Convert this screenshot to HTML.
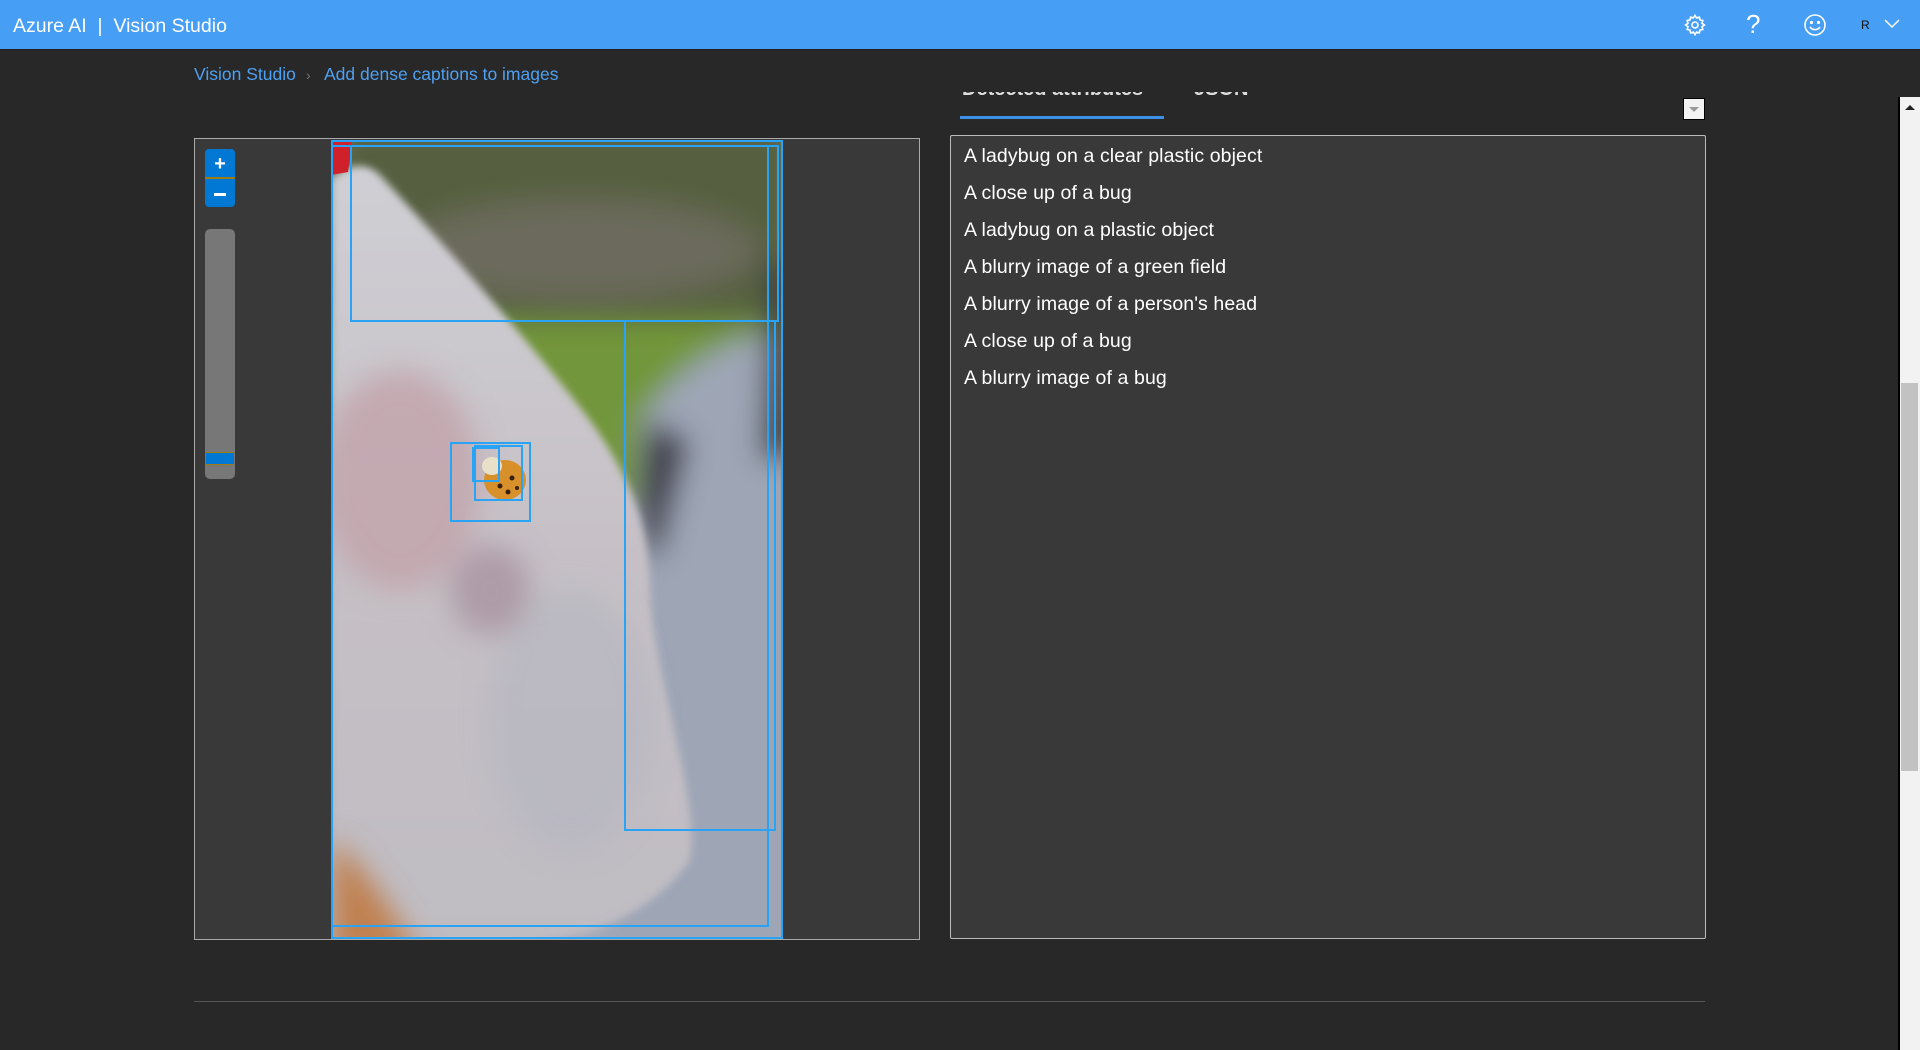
<!DOCTYPE html>
<html><head><meta charset="utf-8"><style>
*{margin:0;padding:0;box-sizing:border-box}
body{width:1920px;height:1050px;background:#282828;position:relative;overflow:hidden;font-family:"Segoe UI","Liberation Sans",sans-serif;color:#fff}
.hdr{position:absolute;left:0;top:0;width:1920px;height:50px;background:#469ff5;border-bottom:1px solid #1e1e1e}
.hdr .t{position:absolute;left:13px;top:15px;font-size:19.5px;color:#fff}
.bc{position:absolute;top:64px;font-size:17.5px;color:#4ea0f2}
.abs{position:absolute}
.cap{position:absolute;left:964px;font-size:19.5px;color:#fff;letter-spacing:.1px}
</style></head><body>
<div class="hdr"><div class="t">Azure AI&nbsp; |&nbsp; Vision Studio</div>
<svg class="abs" style="left:1683px;top:13px" width="24" height="24" viewBox="0 0 24 24" fill="none" stroke="#fff" stroke-width="1.6"><circle cx="12" cy="12" r="3"/><path d="M12 2.5l1.6 2.4 2.8-.8.6 2.8 2.8.6-.8 2.8 2.4 1.7-2.4 1.7.8 2.8-2.8.6-.6 2.8-2.8-.8L12 21.5l-1.6-2.4-2.8.8-.6-2.8-2.8-.6.8-2.8L2.6 12l2.4-1.7-.8-2.8 2.8-.6.6-2.8 2.8.8z"/></svg>
<div class="abs" style="left:1746px;top:9px;font-size:26px;font-weight:300;color:#fff">?</div>
<svg class="abs" style="left:1803px;top:13px" width="24" height="24" viewBox="0 0 24 24" fill="none" stroke="#fff" stroke-width="1.6"><circle cx="12" cy="12" r="10"/><circle cx="8.5" cy="9.5" r=".8" fill="#fff"/><circle cx="15.5" cy="9.5" r=".8" fill="#fff"/><path d="M7 14c2.5 3.5 7.5 3.5 10 0"/></svg>
<div class="abs" style="left:1861px;top:18px;font-size:12px;color:#111">R</div>
<svg class="abs" style="left:1884px;top:19px" width="16" height="10" viewBox="0 0 16 10" fill="none" stroke="#fff" stroke-width="1.5"><path d="M1 1l7 7 7-7"/></svg>
</div>
<div class="bc" style="left:194px">Vision Studio</div>
<div class="bc" style="left:306px;color:#777;font-size:14px;top:67px">›</div>
<div class="bc" style="left:324px">Add dense captions to images</div>

<div class="abs" style="left:962px;top:92px;width:200px;height:9px;overflow:hidden"><div style="margin-top:-14px;font-size:20px;font-weight:600;color:#ddd">Detected attributes</div></div>
<div class="abs" style="left:1194px;top:92px;width:60px;height:9px;overflow:hidden"><div style="margin-top:-14px;font-size:20px;font-weight:600;color:#ddd">JSON</div></div>
<div class="abs" style="left:960px;top:116px;width:204px;height:3px;background:#3c91e6"></div>
<div class="abs" style="left:1683px;top:98px;width:22px;height:22px;background:#f2f2f2;border:1px solid #000"></div>
<div class="abs" style="left:1689px;top:107px;width:0;height:0;border-left:5px solid transparent;border-right:5px solid transparent;border-top:5px solid #999"></div>

<div class="abs" style="left:194px;top:138px;width:726px;height:802px;background:#393939;border:1px solid #aaa"></div>
<div class="abs" style="left:205px;top:149px;width:30px;height:58px;background:#0078d4;border-radius:4px"></div>
<div class="abs" style="left:205px;top:177px;width:30px;height:2px;background:#a07c10"></div>
<div class="abs" style="left:205px;top:152px;width:30px;font-size:20px;font-weight:bold;text-align:center;line-height:24px">+</div>
<div class="abs" style="left:214px;top:193px;width:12px;height:2.5px;background:#fff"></div>
<div class="abs" style="left:205px;top:229px;width:30px;height:250px;background:#777;border-radius:5px"></div>
<div class="abs" style="left:206px;top:452px;width:28px;height:13px;background:#0078d4;border-bottom:1px solid #a07c10;border-top:1px solid #a07c10"></div>

<svg class="abs" style="left:331px;top:140px" width="452" height="799" viewBox="331 140 452 799">
<defs>
<filter id="b" x="-20%" y="-20%" width="140%" height="140%"><feGaussianBlur stdDeviation="14"/></filter>
<filter id="b2"><feGaussianBlur stdDeviation="4"/></filter>
<linearGradient id="bot" x1="0" y1="0" x2="0" y2="1"><stop offset="0" stop-color="#cfcfd4"/><stop offset=".5" stop-color="#c6c0c6"/><stop offset="1" stop-color="#bfbcc2"/></linearGradient>
</defs>
<rect x="331" y="140" width="452" height="799" fill="#a8acb8"/>
<g filter="url(#b)">
<rect x="331" y="120" width="470" height="210" fill="#56603f"/>
<ellipse cx="580" cy="250" rx="180" ry="50" fill="#6c6a5c"/>
<rect x="331" y="320" width="470" height="180" fill="#72963a"/>
<path d="M640 420 C680 360 740 330 800 330 L800 960 L600 960 Z" fill="#9ea6b6"/>
<path d="M650 420 C630 500 640 560 660 560 L690 440 Z" fill="#3c3c48"/>
<path d="M770 260 L800 260 L800 460 L760 460 Z" fill="#3a3c40"/>
</g>
<g filter="url(#b2)">
<path d="M331 180 C345 165 365 160 380 175 C440 240 520 330 590 420 C640 490 650 540 650 600 C660 700 700 800 690 860 C640 930 560 945 480 945 L331 945 Z" fill="url(#bot)"/>
</g>
<g filter="url(#b)">
<ellipse cx="400" cy="480" rx="80" ry="110" fill="#c2a2aa" opacity=".8"/>
<ellipse cx="490" cy="590" rx="40" ry="45" fill="#9f8494" opacity=".6"/>
<ellipse cx="570" cy="720" rx="80" ry="130" fill="#b2b4c0" opacity=".5"/>
<path d="M331 840 C360 860 400 920 420 960 L331 960 Z" fill="#c08050"/>
</g>
<path d="M331 140 L352 140 L348 172 L331 175 Z" fill="#d0202a"/>
<ellipse cx="505" cy="480" rx="21" ry="20" fill="#d8902a"/>
<ellipse cx="492" cy="466" rx="10" ry="9" fill="#e8e0c8"/>
<circle cx="500" cy="486" r="2.5" fill="#3a2010"/><circle cx="512" cy="478" r="2.5" fill="#3a2010"/><circle cx="508" cy="492" r="2.5" fill="#3a2010"/><circle cx="517" cy="488" r="2" fill="#3a2010"/>
<g fill="none" stroke="#29a3f5" stroke-width="2">
<rect x="332" y="141" width="450" height="797"/>
<rect x="351" y="146" width="427" height="175"/>
<rect x="332" y="146" width="436" height="780"/>
<rect x="625" y="321" width="150" height="509"/>
<rect x="451" y="443" width="79" height="78"/>
<rect x="475" y="446" width="47" height="54"/>
<rect x="473" y="448" width="26" height="33"/>
</g>
</svg>

<div class="abs" style="left:950px;top:135px;width:756px;height:804px;background:#393939;border:1px solid #bbb;border-radius:2px"></div>
<div class="cap" style="top:145px">A ladybug on a clear plastic object</div>
<div class="cap" style="top:182px">A close up of a bug</div>
<div class="cap" style="top:219px">A ladybug on a plastic object</div>
<div class="cap" style="top:256px">A blurry image of a green field</div>
<div class="cap" style="top:293px">A blurry image of a person's head</div>
<div class="cap" style="top:330px">A close up of a bug</div>
<div class="cap" style="top:367px">A blurry image of a bug</div>

<div class="abs" style="left:194px;top:1001px;width:1511px;height:1px;background:#555"></div>

<div class="abs" style="left:1898px;top:97px;width:2px;height:953px;background:#000"></div>
<div class="abs" style="left:1900px;top:97px;width:20px;height:953px;background:#f2f2f2"></div>
<div class="abs" style="left:1905px;top:105px;width:0;height:0;border-left:5px solid transparent;border-right:5px solid transparent;border-bottom:5px solid #222"></div>
<div class="abs" style="left:1901px;top:383px;width:17px;height:388px;background:#c2c2c2"></div>
</body></html>
